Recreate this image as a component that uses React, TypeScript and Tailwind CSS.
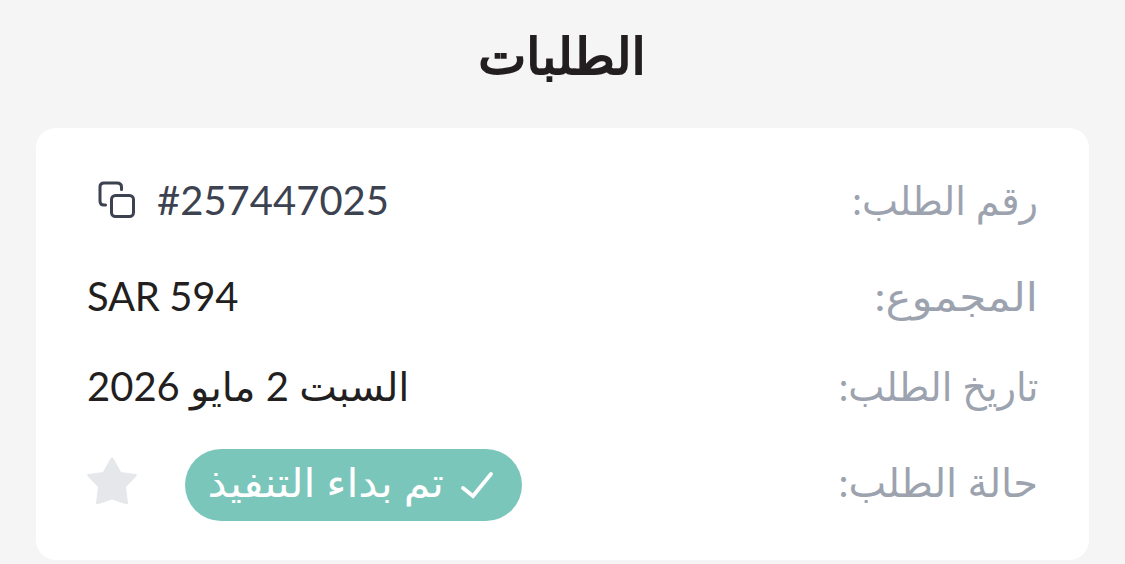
import type { ReactNode } from "react";

function Row({ label, labelClass, className, children }: { label: string; labelClass: string; className: string; children: ReactNode }) {
  return (
    <div className={`flex items-center justify-between ${className}`}>
      <dt className={`origin-right whitespace-nowrap text-[#9ca3af] ${labelClass}`}>{label}</dt>
      <dd className="flex items-center">{children}</dd>
    </div>
  );
}

function CopyIcon() {
  return (
    <svg className="size-[38px]" viewBox="0 0 38 38" fill="none" stroke="#3d4250" strokeWidth="3" strokeLinecap="round" strokeLinejoin="round">
      <rect x="14.5" y="14.5" width="22" height="21" rx="4" />
      <path d="M8.5 24H7Q3 24 3 20V6Q3 2 7 2H20Q24.5 2 24.5 6V8.5" />
    </svg>
  );
}

export default function App() {
  return (
    <main dir="rtl" className="flex h-[564px] flex-col overflow-hidden bg-[#f5f5f5] px-9 font-['Lato','DejaVu_Sans',sans-serif] text-[40px] leading-[60px] text-[#231f20]">
      <header className="flex h-32 justify-center pt-[25px]">
        <h1 className="scale-x-[1.02] text-[50px] font-normal leading-[60px] [-webkit-text-stroke:2px_#231f20]">الطلبات</h1>
      </header>
      <dl className="h-[432px] rounded-[20px] bg-white pt-9 pr-[51px] pl-[51px]">
        <Row label="رقم الطلب:" labelClass="scale-x-[0.957]" className="h-[72px]">
          <span dir="ltr" className="flex items-center gap-[22px] pl-[10px] text-[#3d4250]"><CopyIcon /><span>#257447025</span></span>
        </Row>
        <Row label="المجموع:" labelClass="scale-x-[1.09]" className="mt-6 h-[72px]">
          <span dir="ltr" className="tracking-[-0.3px]">SAR 594</span>
        </Row>
        <Row label="تاريخ الطلب:" labelClass="scale-x-[0.958]" className="mt-[18px] h-[72px]">
          <span className="whitespace-nowrap">السبت 2 مايو 2026</span>
        </Row>
        <Row label="حالة الطلب:" labelClass="pb-[6px]" className="mt-[27px] h-[72px]">
          <span className="flex h-[72px] w-[337px] items-center rounded-full bg-[#7bc6ba] pr-7 text-white">
            <svg className="h-7 w-[34px] shrink-0" viewBox="0 0 34 28" fill="none" stroke="currentColor" strokeWidth="3.8" strokeLinecap="round" strokeLinejoin="miter"><path d="M3 17L13 25L31 3" /></svg>
            <span className="mr-[16px] origin-right scale-x-[1.07] whitespace-nowrap pb-[6px]">تم بداء التنفيذ</span>
          </span>
          <svg className="mr-[48px] mb-[9px] h-[48px] w-[50px]" viewBox="0 0 50 48" fill="#e5e7eb"><path d="M23.5 1.5Q25 -.5 26.500 1.5L34 15L48.5 17Q51 17.5 49 19.5L39 30L41 46Q41 48 38.5 47L25 42.5L11.5 47Q9 48 9 46L11 30L1 19.5Q-1 17.5 1.5 17L16 15Z" /></svg>
        </Row>
      </dl>
    </main>
  );
}
